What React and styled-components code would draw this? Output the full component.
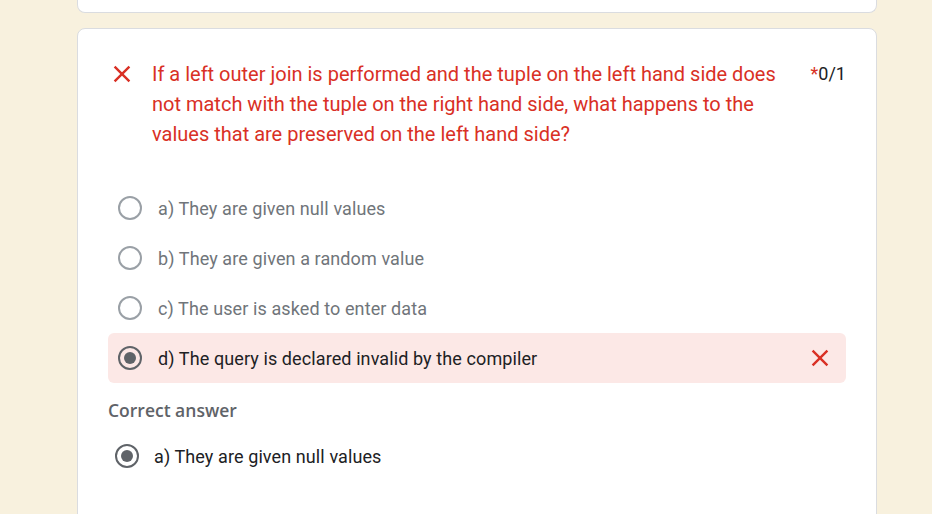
import React from "react";
import styled, { createGlobalStyle } from "styled-components";

const GlobalStyle = createGlobalStyle`
  html, body {
    margin: 0;
    padding: 0;
    background: #f8f1de;
    overflow: hidden;
  }
  body {
    font-family: Roboto, "Liberation Sans", Arial, sans-serif;
    color: #202124;
  }
`;

const Page = styled.div`
  display: flex;
  flex-direction: column;
  width: 800px;
  margin-left: 77px;
`;

const StubCard = styled.div`
  height: 12px;
  background: #fff;
  border: 1px solid #dadce0;
  border-top: none;
  border-radius: 0 0 8px 8px;
  margin-bottom: 15px;
`;

const Card = styled.div`
  background: #fff;
  border: 1px solid #dadce0;
  border-radius: 8px;
  padding: 30px 30px 40px;
  min-height: 520px;
`;

const QuestionRow = styled.div`
  display: flex;
  align-items: flex-start;
  padding-left: 5px;
`;

const QuestionIcon = styled.div`
  height: 30px;
  display: flex;
  align-items: center;
  margin-right: 21px;
  flex-shrink: 0;
`;

const QuestionText = styled.div`
  flex: 1;
  font-size: 20px;
  line-height: 30px;
  color: #d93025;
`;

const Score = styled.div`
  margin-left: 24px;
  font-size: 18px;
  line-height: 30px;
  color: #202124;
  white-space: nowrap;

  span {
    color: #d93025;
  }
`;

const Options = styled.div`
  display: flex;
  flex-direction: column;
  margin-top: 34px;
`;

const Option = styled.div`
  display: flex;
  align-items: center;
  height: 50px;
  padding: 0 17px 0 ${(p) => p.$indent || 10}px;
  border-radius: 6px;
  background: ${(p) => (p.$wrong ? "#fce8e6" : "transparent")};
`;

const Radio = styled.div`
  width: 24px;
  height: 24px;
  box-sizing: border-box;
  border-radius: 50%;
  border: 2.5px solid ${(p) => (p.$checked ? "#5f6368" : "#9aa0a6")};
  display: flex;
  align-items: center;
  justify-content: center;
  flex-shrink: 0;
  margin-right: ${(p) => p.$gap || 16}px;

  &::after {
    content: "";
    display: ${(p) => (p.$checked ? "block" : "none")};
    width: 12px;
    height: 12px;
    border-radius: 50%;
    background: #5f6368;
  }
`;

const OptionLabel = styled.div`
  flex: 1;
  font-size: 18px;
  letter-spacing: 0.1px;
  color: ${(p) => (p.$active ? "#202124" : "#70757a")};
`;

const CorrectTitle = styled.div`
  margin-top: 15px;
  margin-bottom: 9px;
  font-family: "Open Sans", Roboto, sans-serif;
  font-weight: 600;
  font-size: 17.5px;
  line-height: 24px;
  color: #5f6368;
`;

const CrossIcon = styled.svg`
  flex-shrink: 0;
  display: block;
`;

const Cross = () => (
  <CrossIcon width="18" height="18" viewBox="0 0 18 18">
    <path
      d="M1.6 1.6L16.4 16.4M16.4 1.6L1.6 16.4"
      stroke="#d93025"
      strokeWidth="2.4"
      fill="none"
    />
  </CrossIcon>
);

const options = [
  "a) They are given null values",
  "b) They are given a random value",
  "c) The user is asked to enter data",
  "d) The query is declared invalid by the compiler",
];

export default function App() {
  const chosen = 3;
  return (
    <>
      <GlobalStyle />
      <Page>
        <StubCard />
        <Card>
          <QuestionRow>
            <QuestionIcon>
              <Cross />
            </QuestionIcon>
            <QuestionText>
              If a left outer join is performed and the tuple on the left hand
              side does not match with the tuple on the right hand side, what
              happens to the values that are preserved on the left hand side?
            </QuestionText>
            <Score>
              <span>*</span>0/1
            </Score>
          </QuestionRow>
          <Options>
            {options.map((text, i) => (
              <Option key={text} $wrong={i === chosen}>
                <Radio $checked={i === chosen} />
                <OptionLabel $active={i === chosen}>{text}</OptionLabel>
                {i === chosen && <Cross />}
              </Option>
            ))}
          </Options>
          <CorrectTitle>Correct answer</CorrectTitle>
          <Option $indent={7}>
            <Radio $checked $gap={15} />
            <OptionLabel $active>{options[0]}</OptionLabel>
          </Option>
        </Card>
      </Page>
    </>
  );
}
